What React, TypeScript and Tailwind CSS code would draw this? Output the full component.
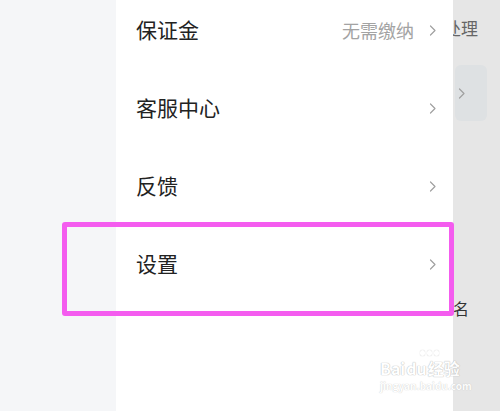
import React from 'react';

const Chevron = () => (
  <svg width="8" height="13" viewBox="0 0 8 13" fill="none" className="shrink-0">
    <path d="M1.5 2 L6 6.5 L1.5 11" stroke="#a0a0a0" strokeWidth="1.2" strokeLinecap="round" strokeLinejoin="round" />
  </svg>
);

const rows = [
  { label: '保证金', value: '无需缴纳' },
  { label: '客服中心' },
  { label: '反馈' },
  { label: '设置' },
];

export default function App() {
  return (
    <div
      className="relative w-[500px] h-[411px] flex overflow-hidden"
      style={{ fontFamily: '"Noto Sans CJK SC", "Noto Sans", sans-serif' }}
    >
      <div className="w-[116px] bg-[#f5f6f8]" />

      <div className="w-[337px] bg-white flex flex-col">
        <div className="mt-[-9px]">
          {rows.map((r) => (
            <div key={r.label} className="h-[78px] flex items-center pl-5 pr-4">
              <span className="text-[21px] text-[#222] flex-1">{r.label}</span>
              {r.value && <span className="text-[18px] text-[#a3a3a3] mr-[15px]">{r.value}</span>}
              <Chevron />
            </div>
          ))}
        </div>
      </div>

      <div className="flex-1 bg-[#e6e6e6] flex flex-col overflow-hidden">
        <div className="ml-[-9px] mt-[16px] text-[17px] text-[#666] whitespace-nowrap leading-6">处理</div>
        <div className="mt-[25px] ml-[2px] w-[32px] h-[56px] rounded-md bg-[#dee1e3] flex items-center pl-[3px]">
          <Chevron />
        </div>
        <div className="mt-[177px] text-[16px] text-[#333] leading-5">名</div>
      </div>

      <div className="absolute left-[62px] top-[222px] w-[392px] h-[94px] border-[5px] border-[#f45cef] rounded-[3px]" />

      <div className="absolute left-[380px] top-[350px] flex flex-col items-start opacity-90">
        <div className="ml-[40px] h-[8px] flex gap-[2px]">
          <span className="w-[5px] h-[6px] rounded-full bg-white shadow-[0_0_1px_#bbb]" />
          <span className="w-[5px] h-[6px] rounded-full bg-white shadow-[0_0_1px_#bbb]" />
          <span className="w-[5px] h-[6px] rounded-full bg-white shadow-[0_0_1px_#bbb]" />
        </div>
        <div
          className="flex gap-[1px] text-[16px] font-bold text-white leading-5 whitespace-nowrap"
          style={{ textShadow: '0 0 1px #b5b5b5, 0 0 1px #b5b5b5' }}
        >
          <span>Bai</span>
          <span>du</span>
          <span>经验</span>
        </div>
        <div
          className="text-[10px] font-bold text-white leading-4 whitespace-nowrap"
          style={{ textShadow: '0 0 1px #b5b5b5' }}
        >
          jingyan.baidu.com
        </div>
      </div>
    </div>
  );
}
